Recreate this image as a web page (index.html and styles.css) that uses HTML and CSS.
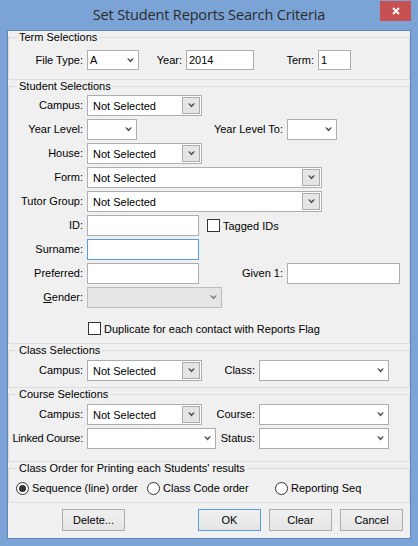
FILE: index.html
```html
<!DOCTYPE html>
<html lang="en">
<head>
<meta charset="utf-8">
<title>Set Student Reports Search Criteria</title>
<link rel="stylesheet" href="styles.css">
</head>
<body>
<div class="window">
  <div class="titlebar">
    <span class="title">Set Student Reports Search Criteria</span>
    <button class="close" aria-label="Close"><svg width="8" height="8" viewBox="0 0 8 8"><path d="M1 1L7 7M7 1L1 7" stroke="#fff" stroke-width="1.8"/></svg></button>
  </div>
  <div class="panel">
    <fieldset class="group g-term">
      <legend>Term Selections</legend>
      <div class="row r20 first">
        <span class="lbl w74">File Type:</span>
        <div class="combo w52 tight"><span class="val">A</span><svg class="chev" width="7" height="5" viewBox="0 0 7 5"><path d="M0 0.5H1.8L3.5 2.3L5.2 0.5H7L3.5 4.5Z"/></svg></div>
        <span class="lbl w43">Year:</span>
        <div class="field w68 tight">2014</div>
        <span class="lbl w60">Term:</span>
        <div class="field w33 tight">1</div>
      </div>
    </fieldset>

    <fieldset class="group g-student">
      <legend>Student Selections</legend>
      <div class="rows">
        <div class="row">
          <span class="lbl w74">Campus:</span>
          <div class="combo btn w115"><span class="val">Not Selected</span><span class="dd"><svg class="chev" width="7" height="5" viewBox="0 0 7 5"><path d="M0 0.5H1.8L3.5 2.3L5.2 0.5H7L3.5 4.5Z"/></svg></span></div>
        </div>
        <div class="row">
          <span class="lbl w74">Year Level:</span>
          <div class="combo w50"><span class="val"></span><svg class="chev" width="7" height="5" viewBox="0 0 7 5"><path d="M0 0.5H1.8L3.5 2.3L5.2 0.5H7L3.5 4.5Z"/></svg></div>
          <span class="lbl w146">Year Level To:</span>
          <div class="combo w50"><span class="val"></span><svg class="chev" width="7" height="5" viewBox="0 0 7 5"><path d="M0 0.5H1.8L3.5 2.3L5.2 0.5H7L3.5 4.5Z"/></svg></div>
        </div>
        <div class="row">
          <span class="lbl w74">House:</span>
          <div class="combo btn w115"><span class="val">Not Selected</span><span class="dd"><svg class="chev" width="7" height="5" viewBox="0 0 7 5"><path d="M0 0.5H1.8L3.5 2.3L5.2 0.5H7L3.5 4.5Z"/></svg></span></div>
        </div>
        <div class="row">
          <span class="lbl w74">Form:</span>
          <div class="combo btn w235"><span class="val">Not Selected</span><span class="dd"><svg class="chev" width="7" height="5" viewBox="0 0 7 5"><path d="M0 0.5H1.8L3.5 2.3L5.2 0.5H7L3.5 4.5Z"/></svg></span></div>
        </div>
        <div class="row">
          <span class="lbl w74">Tutor Group:</span>
          <div class="combo btn w235"><span class="val">Not Selected</span><span class="dd"><svg class="chev" width="7" height="5" viewBox="0 0 7 5"><path d="M0 0.5H1.8L3.5 2.3L5.2 0.5H7L3.5 4.5Z"/></svg></span></div>
        </div>
        <div class="row">
          <span class="lbl w74">ID:</span>
          <div class="field w112"></div>
          <span class="check ml8"></span><span class="ctext">Tagged IDs</span>
        </div>
        <div class="row">
          <span class="lbl w74">Surname:</span>
          <div class="field w112 focus"></div>
        </div>
        <div class="row">
          <span class="lbl w74">Preferred:</span>
          <div class="field w112"></div>
          <span class="lbl w84">Given 1:</span>
          <div class="field w113"></div>
        </div>
        <div class="row">
          <span class="lbl w74"><span class="u">G</span>ender:</span>
          <div class="combo disabled w135"><span class="val"></span><svg class="chev" width="7" height="5" viewBox="0 0 7 5"><path d="M0 0.5H1.8L3.5 2.3L5.2 0.5H7L3.5 4.5Z"/></svg></div>
        </div>
      </div>
      <div class="row dup">
        <span class="check"></span><span class="ctext">Duplicate for each contact with Reports Flag</span>
      </div>
    </fieldset>

    <fieldset class="group g-class">
      <legend>Class Selections</legend>
      <div class="row first3">
        <span class="lbl w74">Campus:</span>
        <div class="combo btn w115"><span class="val">Not Selected</span><span class="dd"><svg class="chev" width="7" height="5" viewBox="0 0 7 5"><path d="M0 0.5H1.8L3.5 2.3L5.2 0.5H7L3.5 4.5Z"/></svg></span></div>
        <span class="lbl w53">Class:</span>
        <div class="combo w130"><span class="val"></span><svg class="chev" width="7" height="5" viewBox="0 0 7 5"><path d="M0 0.5H1.8L3.5 2.3L5.2 0.5H7L3.5 4.5Z"/></svg></div>
      </div>
    </fieldset>

    <fieldset class="group g-course">
      <legend>Course Selections</legend>
      <div class="rows first3">
        <div class="row">
          <span class="lbl w74">Campus:</span>
          <div class="combo btn w115"><span class="val">Not Selected</span><span class="dd"><svg class="chev" width="7" height="5" viewBox="0 0 7 5"><path d="M0 0.5H1.8L3.5 2.3L5.2 0.5H7L3.5 4.5Z"/></svg></span></div>
          <span class="lbl w53">Course:</span>
          <div class="combo w130"><span class="val"></span><svg class="chev" width="7" height="5" viewBox="0 0 7 5"><path d="M0 0.5H1.8L3.5 2.3L5.2 0.5H7L3.5 4.5Z"/></svg></div>
        </div>
        <div class="row">
          <span class="lbl w74 narrow">Linked Course:</span>
          <div class="combo w129"><span class="val"></span><svg class="chev" width="7" height="5" viewBox="0 0 7 5"><path d="M0 0.5H1.8L3.5 2.3L5.2 0.5H7L3.5 4.5Z"/></svg></div>
          <span class="lbl w39">Status:</span>
          <div class="combo w130"><span class="val"></span><svg class="chev" width="7" height="5" viewBox="0 0 7 5"><path d="M0 0.5H1.8L3.5 2.3L5.2 0.5H7L3.5 4.5Z"/></svg></div>
        </div>
      </div>
    </fieldset>

    <fieldset class="group g-order">
      <legend>Class Order for Printing each Students' results</legend>
      <div class="radios">
        <span class="ritem w131"><span class="radio on"></span>Sequence (line) order</span>
        <span class="ritem w128"><span class="radio"></span>Class Code order</span>
        <span class="ritem"><span class="radio"></span>Reporting Seq</span>
      </div>
    </fieldset>

    <div class="buttons">
      <button class="btn-w delete">Delete...</button>
      <button class="btn-w ok">OK</button>
      <button class="btn-w">Clear</button>
      <button class="btn-w">Cancel</button>
    </div>
  </div>
</div>
</body>
</html>
```

FILE: styles.css
```css
html, body {
  margin: 0;
  padding: 0;
}
body {
  font-family: "Liberation Sans", Arial, sans-serif;
  font-size: 11px;
  color: #000;
  background: #7ba3d6;
}
.window {
  width: 418px;
  height: 546px;
  box-sizing: border-box;
  background: #7ba3d6;
  padding: 0 7px 7px 7px;
  display: flex;
  flex-direction: column;
}
.titlebar {
  height: 30px;
  display: flex;
  align-items: center;
  justify-content: center;
  position: relative;
}
.title {
  font-family: "Open Sans", "Liberation Sans", sans-serif;
  font-size: 14.5px;
  letter-spacing: -0.15px;
  color: #2b2b2b;
  margin-top: -1px;
}
.close {
  position: absolute;
  right: 0;
  top: 1px;
  width: 31px;
  height: 20px;
  border: 0;
  padding: 0;
  margin: 0;
  background: #c75050;
  display: flex;
  align-items: center;
  justify-content: center;
}
.panel {
  flex: 1;
  border: 1px solid #5f84b5;
  background: #f0f0f0;
  display: flex;
  flex-direction: column;
}
.group {
  margin: 0;
  padding: 0;
  border: 1px solid #dcdcdc;
  min-width: 0;
}
.group legend {
  font-size: 11px;
  line-height: 13px;
  padding: 0 2px;
  margin-left: 8px;
}
.g-term { padding-bottom: 9px; }
.g-student { padding-bottom: 8px; }
.g-class { padding-bottom: 6px; }
.g-course { padding-bottom: 12px; }
.g-order { padding-bottom: 7px; }

.row {
  display: flex;
  align-items: center;
  height: 21px;
}
.row.r20 { height: 20px; }
.row.first { margin-top: 6px; }
.first3 { margin-top: 3px; }
.rows {
  display: flex;
  flex-direction: column;
  gap: 3px;
}
.g-student .rows { margin-top: 2px; }
.row.dup {
  height: 13px;
  margin-top: 14px;
  padding-left: 79px;
}

.lbl {
  text-align: right;
  margin-right: 4px;
  white-space: nowrap;
  line-height: 13px;
  flex: none;
}
.lbl.narrow { letter-spacing: -0.25px; }
.u { text-decoration: underline; }
.w33 { width: 33px; }
.w39 { width: 39px; }
.w43 { width: 43px; }
.w50 { width: 50px; }
.w52 { width: 52px; }
.w53 { width: 53px; }
.w60 { width: 60px; }
.w68 { width: 68px; }
.w74 { width: 74px; }
.w84 { width: 84px; }
.w112 { width: 112px; }
.w113 { width: 113px; }
.w115 { width: 115px; }
.w129 { width: 129px; }
.w130 { width: 130px; }
.w135 { width: 135px; }
.w146 { width: 146px; }
.w235 { width: 235px; }

.field, .combo {
  box-sizing: border-box;
  height: 100%;
  background: #fff;
  border: 1px solid #abadb3;
  display: flex;
  align-items: center;
  padding-left: 5px;
  flex: none;
  white-space: nowrap;
}
.tight { padding-left: 2px; }
.field.focus { border-color: #569de5; }
.combo .val { flex: 1; }
.combo .chev {
  fill: #4d4d4d;
  margin-right: 4px;
  flex: none;
}
.combo.btn { padding-right: 0; }
.combo.btn .dd {
  box-sizing: border-box;
  width: 18px;
  border: 1px solid #acacac;
  margin: 1px 1px 1px 0;
  height: calc(100% - 2px);
  background: #e5e5e5;
  display: flex;
  align-items: center;
  justify-content: center;
}
.combo.btn .dd .chev { margin: 0; }
.combo.disabled {
  background: #e5e5e5;
  border-color: #bcbcbc;
}
.combo.disabled .chev { fill: #7a7a7a; }

.check {
  box-sizing: border-box;
  width: 13px;
  height: 13px;
  background: #fff;
  border: 1px solid #333;
  flex: none;
}
.ml8 { margin-left: 8px; }
.ctext {
  margin-left: 3px;
  white-space: nowrap;
}

.radios {
  display: flex;
  align-items: center;
  height: 14px;
  margin-top: 6px;
  padding-left: 7px;
}
.ritem {
  display: flex;
  align-items: center;
  white-space: nowrap;
  flex: none;
}
.w131 { width: 131px; }
.w128 { width: 128px; }
.radio {
  box-sizing: border-box;
  width: 13px;
  height: 13px;
  border: 1px solid #333;
  border-radius: 50%;
  background: #fff;
  margin-right: 3px;
  display: flex;
  align-items: center;
  justify-content: center;
  flex: none;
}
.radio.on::after {
  content: "";
  width: 7px;
  height: 7px;
  border-radius: 50%;
  background: #333;
}

.buttons {
  display: flex;
  margin-top: 6px;
  height: 22px;
  gap: 8px;
  padding-left: 54px;
}
.btn-w {
  box-sizing: border-box;
  width: 63px;
  height: 22px;
  margin: 0;
  padding: 0;
  font-family: "Liberation Sans", Arial, sans-serif;
  font-size: 11px;
  color: #000;
  border: 1px solid #acacac;
  background: linear-gradient(#f0f0f0, #e5e5e5);
}
.btn-w.delete { margin-right: 65px; }
.btn-w.ok { border-color: #569de5; }
```
